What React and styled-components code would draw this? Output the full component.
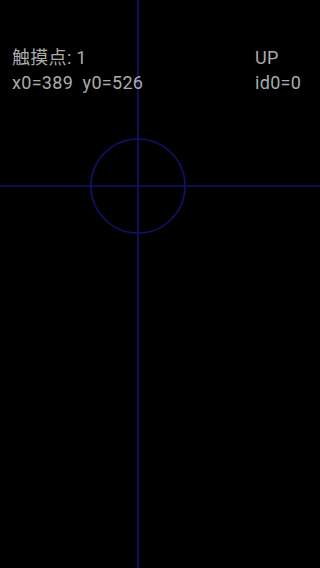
import styled, { createGlobalStyle } from "styled-components";

const GlobalStyle = createGlobalStyle`
  html, body {
    margin: 0;
    padding: 0;
    background: #000;
  }
  #root {
    width: 320px;
    height: 568px;
  }
`;

const Screen = styled.div`
  position: relative;
  width: 320px;
  height: 568px;
  background: #000;
  overflow: hidden;
  font-family: Roboto, "Noto Sans CJK SC", sans-serif;
`;

const Canvas = styled.svg`
  position: absolute;
  inset: 0;
`;

const Hud = styled.div`
  position: relative;
  display: grid;
  grid-template-columns: 243px 1fr;
  padding: 45px 0 0 12px;
`;

const Column = styled.div`
  display: flex;
  flex-direction: column;
`;

const Line = styled.span`
  color: #ababab;
  font-size: 18px;
  line-height: 25px;
  letter-spacing: 0.3px;
  white-space: pre;
`;

const pointer = { x: 138, y: 186, r: 47 };

const App = () => {
  return (
    <>
      <GlobalStyle />
      <Screen>
        <Canvas width="320" height="568" viewBox="0 0 320 568">
          <g stroke="#12126a" strokeWidth="1.6" fill="none">
            <line x1={pointer.x} y1="0" x2={pointer.x} y2="568" />
            <line x1="0" y1={pointer.y} x2="320" y2={pointer.y} />
            <circle cx={pointer.x} cy={pointer.y} r={pointer.r} />
          </g>
        </Canvas>
        <Hud>
          <Column>
            <Line>触摸点: 1</Line>
            <Line>x0=389  y0=526</Line>
          </Column>
          <Column>
            <Line>UP</Line>
            <Line>id0=0</Line>
          </Column>
        </Hud>
      </Screen>
    </>
  );
};

export default App;
